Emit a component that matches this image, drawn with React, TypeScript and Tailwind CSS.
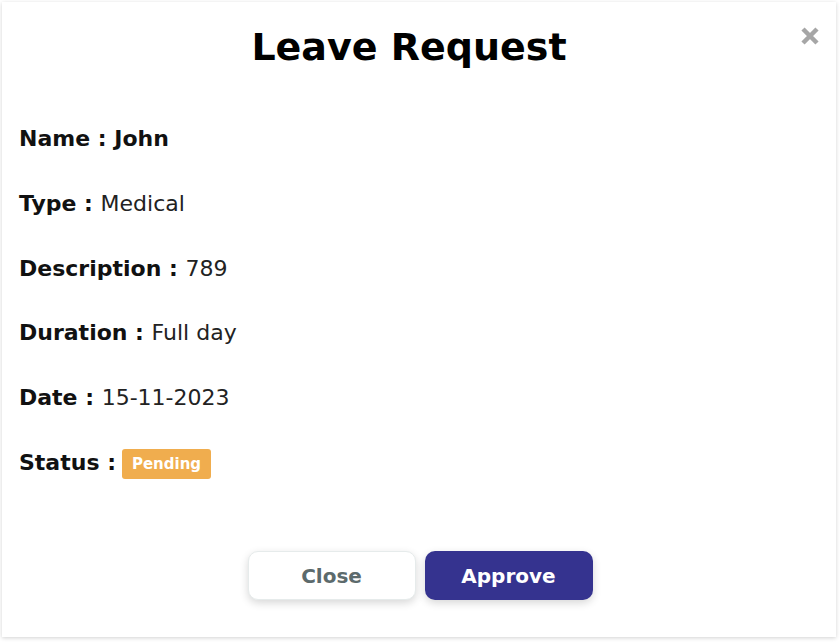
const rows: { label: string; value: string; bold?: boolean }[] = [
    { label: "Name", value: "John", bold: true },
    { label: "Type", value: "Medical" },
    { label: "Description", value: "789" },
    { label: "Duration", value: "Full day" },
    { label: "Date", value: "15-11-2023" },
];

const App = () => {
    return (
        <div
            className="w-[840px] h-[642px] bg-white p-[2px] pr-[4px] pb-[5px]"
            style={{ fontFamily: '"DejaVu Sans", "Noto Sans", sans-serif' }}
        >
            <div className="h-full bg-white shadow-[0_1px_4px_rgba(0,0,0,0.18)] flex flex-col">
                {/* header */}
                <div className="flex items-start pt-[21px] pl-[17px] pr-[15px]">
                    <h1 className="flex-1 text-center text-[38px] leading-[48px] font-bold text-black">
                        Leave Request
                    </h1>
                    <button className="mt-[2px] w-[22px] h-[22px] flex items-center justify-center">
                        <svg width="20" height="20" viewBox="0 0 20 20">
                            <path
                                d="M3 3 L17 17 M17 3 L3 17"
                                stroke="#a6a6a6"
                                strokeWidth="4.5"
                                strokeLinecap="butt"
                            />
                        </svg>
                    </button>
                </div>

                {/* body */}
                <div className="flex flex-col pl-[17px] pt-[52px] gap-[32.8px]">
                    {rows.map((row) => (
                        <div key={row.label} className="text-[22px] leading-[32px] text-[#111]">
                            <span className="font-bold">{row.label} : </span>
                            <span className={row.bold ? "font-bold" : "font-normal text-[#222]"}>
                                {row.value}
                            </span>
                        </div>
                    ))}
                    <div className="flex items-center text-[22px] leading-[32px] text-[#111]">
                        <span className="font-bold">Status :</span>
                        <span className="ml-[6px] mt-[2px] bg-[#f0ad4e] text-white text-[15px] font-bold rounded-[3px] px-[10px] h-[30px] flex items-center">
                            Pending
                        </span>
                    </div>
                </div>

                {/* footer */}
                <div className="mt-auto flex justify-center gap-[9px] pb-[37px] pl-[2px]">
                    <button className="w-[168px] h-[49px] rounded-[10px] bg-white border border-[#e6ebeb] shadow-[0_3px_8px_rgba(0,0,0,0.16)] text-[20px] font-bold text-[#5c6a6c]">
                        Close
                    </button>
                    <button className="w-[168px] h-[49px] rounded-[10px] bg-[#35338f] shadow-[0_3px_8px_rgba(0,0,0,0.16)] text-[20px] font-bold text-white">
                        Approve
                    </button>
                </div>
            </div>
        </div>
    );
};

export default App;
